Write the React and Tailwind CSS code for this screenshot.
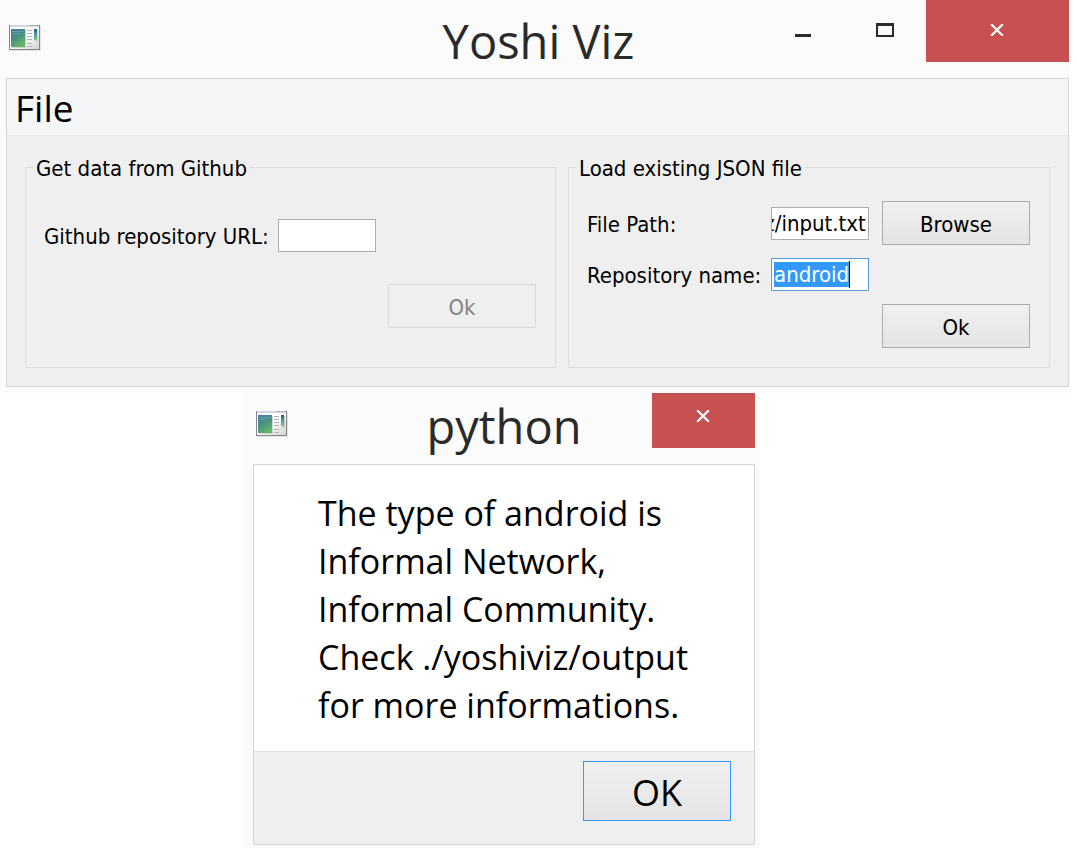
import { useEffect, useRef } from "react";

const SEGOE = "font-['Segoe_UI','Open_Sans',sans-serif]";
const TAHOMA = "font-[Tahoma,'DejaVu_Sans_Condensed','Noto_Sans',sans-serif]";

function AppIcon() {
  return (
    <svg width="34" height="28" viewBox="0 0 34 28" aria-hidden="true">
      <defs>
        <linearGradient id="pane" x1="0" y1="0" x2="0.5" y2="1">
          <stop offset="0" stopColor="#4478a4" />
          <stop offset="0.5" stopColor="#459084" />
          <stop offset="1" stopColor="#66b36a" />
        </linearGradient>
        <linearGradient id="strip" x1="0" y1="0" x2="0" y2="1">
          <stop offset="0" stopColor="#23577f" />
          <stop offset="0.4" stopColor="#4a93a0" />
          <stop offset="1" stopColor="#7cc98a" />
        </linearGradient>
        <linearGradient id="sheet" x1="0" y1="0" x2="1" y2="1">
          <stop offset="0.5" stopColor="#ffffff" />
          <stop offset="1" stopColor="#d4d4d4" />
        </linearGradient>
      </defs>
      <rect x="2" y="2" width="31" height="25" fill="#e4e4e4" />
      <rect x="1" y="1" width="31" height="25" fill="#858585" />
      <rect x="2" y="1" width="29" height="24" fill="url(#sheet)" />
      <rect x="2" y="1" width="29" height="2" fill="#cfd8e2" />
      <path d="M22 1h3v1h-3zM26 1h2v1h-2zM29 1h2v1h-2z" fill="#a0a3a8" />
      <rect x="4" y="6" width="14" height="18" fill="#d0d4d0" />
      <rect x="3" y="5" width="14" height="18" fill="url(#pane)" />
      <path d="M4 7.5h12M4 9.5h8" stroke="#7fa9b4" strokeWidth="1" opacity="0.6" />
      <path d="M19 6.5h5M19 9.5h5M19 12.5h5M19 15.5h5M19 19.5h5M19 22.5h5" stroke="#b4b4b4" strokeWidth="1" />
      <rect x="27" y="6" width="3" height="12" fill="#cdcdcd" />
      <rect x="26" y="5" width="3" height="11" fill="url(#strip)" />
    </svg>
  );
}

function CloseIcon() {
  return (
    <svg width="14" height="12" viewBox="0 0 14 12" aria-hidden="true">
      <path d="M1.2 0.3L12.8 11.7M12.8 0.3L1.2 11.7" stroke="#fff" strokeWidth="2.3" />
    </svg>
  );
}

const pushButton =
  "h-11 w-37 border border-[#acacac] bg-linear-to-b from-[#f0f0f0] to-[#e4e4e4] pt-0.5";
const textBox = "h-[33px] w-[98px] border bg-white outline-none leading-[27px]";
const formRow = "grid grid-cols-[1fr_98px_148px] items-center gap-x-[13px]";
const fieldLabel = "min-w-0 pt-0.5 whitespace-nowrap";
const group = "h-[216px] min-w-0 border border-[#dcdcdc] pr-[19px] pl-[18px]";
const groupTitle = "-ml-[11px] px-[3px] pt-0.5";

function MainWindow() {
  const pathRef = useRef(null);
  const nameRef = useRef(null);

  useEffect(() => {
    pathRef.current.scrollLeft = pathRef.current.scrollWidth;
    nameRef.current.focus();
    nameRef.current.select();
  }, []);

  return (
    <section className="bg-[#fbfbfb] pb-1.5">
      <header className="grid h-[78px] grid-cols-[1fr_auto_1fr] pr-px pl-2">
        <div className="pt-6">
          <AppIcon />
        </div>
        <h1 className={`${SEGOE} pt-1.5 text-[47px] leading-[70px] text-[#2a2a2a]`}>Yoshi Viz</h1>
        <div className="flex items-start justify-end">
          <button type="button" aria-label="Minimize" className="flex h-[62px] w-[82px] items-center justify-center pb-0.5">
            <svg width="18" height="14" viewBox="0 0 18 14" aria-hidden="true">
              <rect x="1" y="11" width="16" height="3" fill="#2a2a2a" />
            </svg>
          </button>
          <button type="button" aria-label="Maximize" className="flex h-[62px] w-[82px] items-center justify-center pb-0.5">
            <svg width="18" height="14" viewBox="0 0 18 14" aria-hidden="true">
              <path fillRule="evenodd" d="M0 0h18v14H0zM2 3v9h14V3z" fill="#2a2a2a" />
            </svg>
          </button>
          <button type="button" aria-label="Close" className="flex h-[62px] w-[143px] items-center justify-center bg-[#c75050] pr-0.5 pb-0.5">
            <CloseIcon />
          </button>
        </div>
      </header>

      <div className="mr-px ml-1.5 border border-[#d5d5d5] bg-[#efefef]">
        <nav className="flex h-[57px] border-b border-[#e8e8e8] bg-[#f5f6f7]">
          <button type="button" className={`${SEGOE} px-2 pt-px text-[37px] text-black`}>
            File
          </button>
        </nav>

        <div className={`${TAHOMA} grid grid-cols-[531fr_482fr] gap-3 px-[18px] pt-4 pb-[18px] text-[22px] leading-[29px] text-black`}>
          <fieldset className={group}>
            <legend className={groupTitle}>Get data from Github</legend>
            <div className="flex items-center gap-[9px] pt-9">
              <label htmlFor="repo-url" className={fieldLabel}>Github repository URL:</label>
              <input id="repo-url" type="text" className={`${textBox} border-[#abadb3] px-[3px]`} />
            </div>
            <div className="flex justify-end pt-8">
              <button type="button" disabled className="h-11 w-37 border border-[#d9d9d9] bg-[#efefef] pt-0.5 text-[#838383]">
                Ok
              </button>
            </div>
          </fieldset>

          <fieldset className={group}>
            <legend className={groupTitle}>Load existing JSON file</legend>
            <div className={`${formRow} pt-[18px]`}>
              <label htmlFor="file-path" className={fieldLabel}>File Path:</label>
              <input
                id="file-path"
                ref={pathRef}
                type="text"
                defaultValue="./yoshiviz/input.txt"
                className={`${textBox} border-[#abadb3] pr-0.5`}
              />
              <button type="button" className={pushButton}>Browse</button>
            </div>
            <div className={`${formRow} pt-[13px]`}>
              <label htmlFor="repo-name" className={fieldLabel}>Repository name:</label>
              <div className="relative flex">
                <input
                  id="repo-name"
                  ref={nameRef}
                  type="text"
                  defaultValue="android"
                  className={`${textBox} border-[#569de5] px-0.5 selection:bg-[#3399ff] selection:text-white`}
                />
                <span className="absolute top-[3px] left-[78px] h-[27px] w-px bg-black" />
              </div>
            </div>
            <div className="flex justify-end pt-[13px]">
              <button type="button" className={pushButton}>Ok</button>
            </div>
          </fieldset>
        </div>
      </div>
    </section>
  );
}

function MessageDialog() {
  return (
    <section role="dialog" aria-labelledby="dialog-title" className={`${SEGOE} ml-[244px] w-[516px] bg-[#fbfbfb] pb-[3px]`}>
      <header className="grid h-[71px] grid-cols-[1fr_auto_1fr] pr-[5px] pl-[9px]">
        <div className="pt-[17px] pl-0.5">
          <AppIcon />
        </div>
        <h2 id="dialog-title" className="text-[47px] leading-[67px] text-[#2a2a2a]">python</h2>
        <div className="flex items-start justify-end">
          <button type="button" aria-label="Close" className="flex h-[55px] w-[103px] justify-center bg-[#c75050] pt-[17px] pr-0.5">
            <CloseIcon />
          </button>
        </div>
      </header>
      <div className="mr-[5px] ml-[9px] border border-[#d5d5d5] bg-white">
        <p className="h-[286px] pt-6 pl-16 text-[34px] leading-[48px] text-black">
          The type of android is
          <br />
          Informal Network,
          <br />
          Informal Community.
          <br />
          Check ./yoshiviz/output
          <br />
          for more informations.
        </p>
        <footer className="flex h-[93px] justify-end border-t border-[#dfdfdf] bg-[#efefef] pt-[9px] pr-[23px]">
          <button
            type="button"
            className="h-15 w-37 border border-[#3399ff] bg-linear-to-b from-[#f0f0f0] to-[#e4e4e4] pt-1 text-[36px] leading-[48px] text-black"
          >
            OK
          </button>
        </footer>
      </div>
    </section>
  );
}

export default function App() {
  return (
    <main className="min-h-screen bg-white pr-[7px]">
      <MainWindow />
      <MessageDialog />
    </main>
  );
}
